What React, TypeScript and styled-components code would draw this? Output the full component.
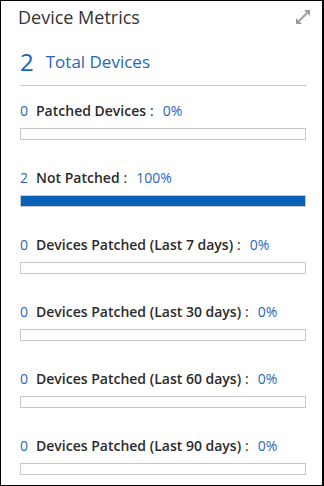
import React from 'react'
import styled, { createGlobalStyle } from 'styled-components'

const GlobalStyle = createGlobalStyle`
  html, body {
    margin: 0;
    padding: 0;
    background: #fff;
  }
  body {
    font-family: "Open Sans", Lato, Arial, sans-serif;
  }
`

type Metric = {
  count: number
  label: string
  percent: number
}

const metrics: Metric[] = [
  { count: 0, label: 'Patched Devices', percent: 0 },
  { count: 2, label: 'Not Patched', percent: 100 },
  { count: 0, label: 'Devices Patched (Last 7 days)', percent: 0 },
  { count: 0, label: 'Devices Patched (Last 30 days)', percent: 0 },
  { count: 0, label: 'Devices Patched (Last 60 days)', percent: 0 },
  { count: 0, label: 'Devices Patched (Last 90 days)', percent: 0 },
]

const ExpandIcon = () => (
  <svg width="14" height="14" viewBox="0 0 14 14" fill="#9b9b9b">
    <polygon points="14,0 14,6 8,0" />
    <polygon points="0,14 0,8 6,14" />
    <line x1="11" y1="3" x2="3" y2="11" stroke="#9b9b9b" strokeWidth="2" />
  </svg>
)

const App: React.FunctionComponent = () => {
  return (
    <>
      <GlobalStyle />
      <Card>
        <Header>
          <Title>Device Metrics</Title>
          <IconButton>
            <ExpandIcon />
          </IconButton>
        </Header>
        <Summary>
          <BigCount>2</BigCount>
          <SummaryLabel>Total Devices</SummaryLabel>
        </Summary>
        <Divider />
        <List>
          {metrics.map((m) => (
            <Row key={m.label}>
              <LabelLine>
                <Count>{m.count}</Count>
                <Label>{m.label}</Label>
                <Colon>:</Colon>
                <Percent>{m.percent}%</Percent>
              </LabelLine>
              <Track>
                <Fill style={{ width: `${m.percent}%` }} />
              </Track>
            </Row>
          ))}
        </List>
      </Card>
    </>
  )
}

const Card = styled.div`
  box-sizing: border-box;
  width: 324px;
  height: 486px;
  border-top: 1px solid #000;
  border-left: 1px solid #000;
  border-right: 2px solid #000;
  border-bottom: 1px solid #000;
  padding: 0 16px 0 19px;
  overflow: hidden;
  background: #fff;
`

const Header = styled.div`
  display: flex;
  justify-content: space-between;
  align-items: center;
  height: 32px;
  margin-left: -2px;
`

const Title = styled.div`
  font-size: 18px;
  line-height: 24px;
  color: #333;
`

const IconButton = styled.div`
  display: flex;
  align-items: center;
  margin-right: -4px;
`

const Summary = styled.div`
  display: flex;
  align-items: center;
  gap: 12px;
  height: 30px;
  margin-top: 14px;
`

const BigCount = styled.span`
  font-size: 24px;
  color: #1b63bd;
  line-height: 30px;
`

const SummaryLabel = styled.span`
  font-size: 17px;
  color: #1f66c0;
  line-height: 30px;
`

const Divider = styled.div`
  height: 1px;
  background: #c8c8c8;
  margin-top: 8px;
`

const List = styled.div`
  display: flex;
  flex-direction: column;
  gap: 28px;
  padding-top: 15px;
`

const Row = styled.div`
  display: flex;
  flex-direction: column;
  gap: 9px;
`

const LabelLine = styled.div`
  display: flex;
  align-items: center;
  height: 18px;
  font-size: 14px;
  white-space: nowrap;
`

const Count = styled.span`
  color: #1f66c0;
  margin-right: 8px;
`

const Label = styled.span`
  color: #2b2b2b;
  font-weight: 600;
`

const Colon = styled.span`
  color: #2b2b2b;
  margin: 0 9px 0 4px;
`

const Percent = styled.span`
  color: #1f66c0;
`

const Track = styled.div`
  box-sizing: border-box;
  height: 12px;
  border: 1px solid #c8c8c8;
  background: #fff;
`

const Fill = styled.div`
  height: 100%;
  background: #0a5fb6;
`

export default App
